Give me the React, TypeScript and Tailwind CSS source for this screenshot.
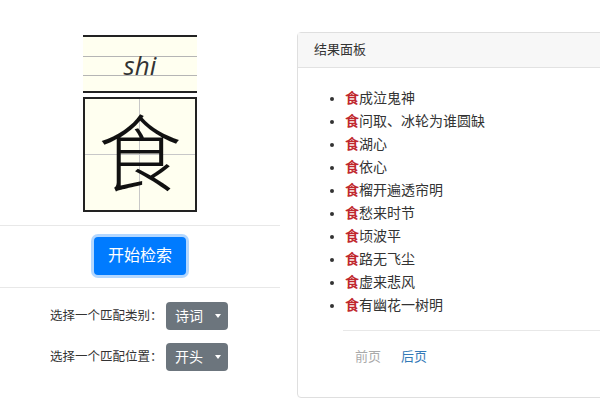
const results = [
  "成泣鬼神",
  "问取、冰轮为谁圆缺",
  "湖心",
  "依心",
  "榴开遍透帘明",
  "愁来时节",
  "顷波平",
  "路无飞尘",
  "虚来悲风",
  "有幽花一树明",
];

const Caret = () => (
  <svg width="6" height="4" viewBox="0 0 6 4" className="ml-auto">
    <path d="M0 0 L6 0 L3 4 Z" fill="#ffffff" />
  </svg>
);

const SelectBox = ({ value }: { value: string }) => (
  <div className="w-[62px] h-[28px] shrink-0 bg-[#6c757d] rounded-[4px] text-white text-[14px] flex items-center pl-[9px] pr-[7px]">
    <span>{value}</span>
    <Caret />
  </div>
);

export default function App() {
  return (
    <div
      className="w-[600px] h-[400px] overflow-hidden flex bg-white text-[#333]"
      style={{ fontFamily: '"Liberation Sans", "Noto Sans CJK SC", sans-serif' }}
    >
      {/* Left: character card + controls */}
      <div className="w-[280px] shrink-0 flex flex-col items-center pt-[35px]">
        {/* pinyin lines */}
        <div className="relative w-[114px] h-[58px] bg-[#fffff0] border-y-2 border-[#222] flex flex-col">
          <div className="h-[19px]" />
          <div className="h-[19px] border-t border-[#b5b5b5]" />
          <div className="flex-1 border-t border-[#b5b5b5]" />
          <span
            className="absolute inset-x-0 top-[15px] text-center italic text-[26px] leading-none text-[#333]"
            style={{ fontFamily: '"Open Sans", sans-serif' }}
          >
            shi
          </span>
        </div>

        {/* tianzige box */}
        <div className="relative mt-[4px] w-[114px] h-[115px] border-2 border-[#222] bg-[#fffff0] grid grid-cols-2 grid-rows-2">
          <div className="border-r border-b border-[#c8c8c8]" />
          <div className="border-b border-[#c8c8c8]" />
          <div className="border-r border-[#c8c8c8]" />
          <div />
          <span className="absolute inset-0 flex items-center justify-center text-[84px] leading-none font-light text-[#111] pt-[2px]">
            食
          </span>
        </div>

        <div className="mt-[13px] w-full border-t border-[#e8e8e8]" />

        <button className="mt-[11px] h-[38px] px-[14px] bg-[#007bff] text-white text-[16px] rounded-[4px] ring-[3px] ring-[#80bdff]/60">
          开始检索
        </button>

        <div className="mt-[12px] w-full border-t border-[#e8e8e8]" />

        <div className="self-stretch pl-[50px] mt-[14px] flex items-center">
          <span className="text-[12.5px] w-[116px] whitespace-nowrap">选择一个匹配类别：</span>
          <SelectBox value="诗词" />
        </div>
        <div className="self-stretch pl-[50px] mt-[13px] flex items-center">
          <span className="text-[12.5px] w-[116px] whitespace-nowrap">选择一个匹配位置：</span>
          <SelectBox value="开头" />
        </div>
      </div>

      {/* Right: results card */}
      <div className="shrink-0 pl-[17px] pt-[32px]">
        <div className="w-[330px] h-[366px] border border-[#dfdfdf] rounded-[4px] flex flex-col">
          <div className="h-[35px] bg-[#f7f7f7] border-b border-[#e2e2e2] px-[16px] flex items-center text-[13px]">
            结果面板
          </div>
          <div className="pt-[19px]">
            <ul className="list-disc pl-[47px] text-[14px] leading-[23px]">
              {results.map((r) => (
                <li key={r}>
                  <span className="text-[#c0282d] font-bold">食</span>
                  {r}
                </li>
              ))}
            </ul>
            <div className="mt-[13px] ml-[45px] border-t border-[#e8e8e8]" />
            <div className="ml-[57px] mt-[17px] flex gap-[20px] text-[13px] leading-[18px]">
              <span className="text-[#aaa]">前页</span>
              <span className="text-[#337ab7]">后页</span>
            </div>
          </div>
        </div>
      </div>
    </div>
  );
}
